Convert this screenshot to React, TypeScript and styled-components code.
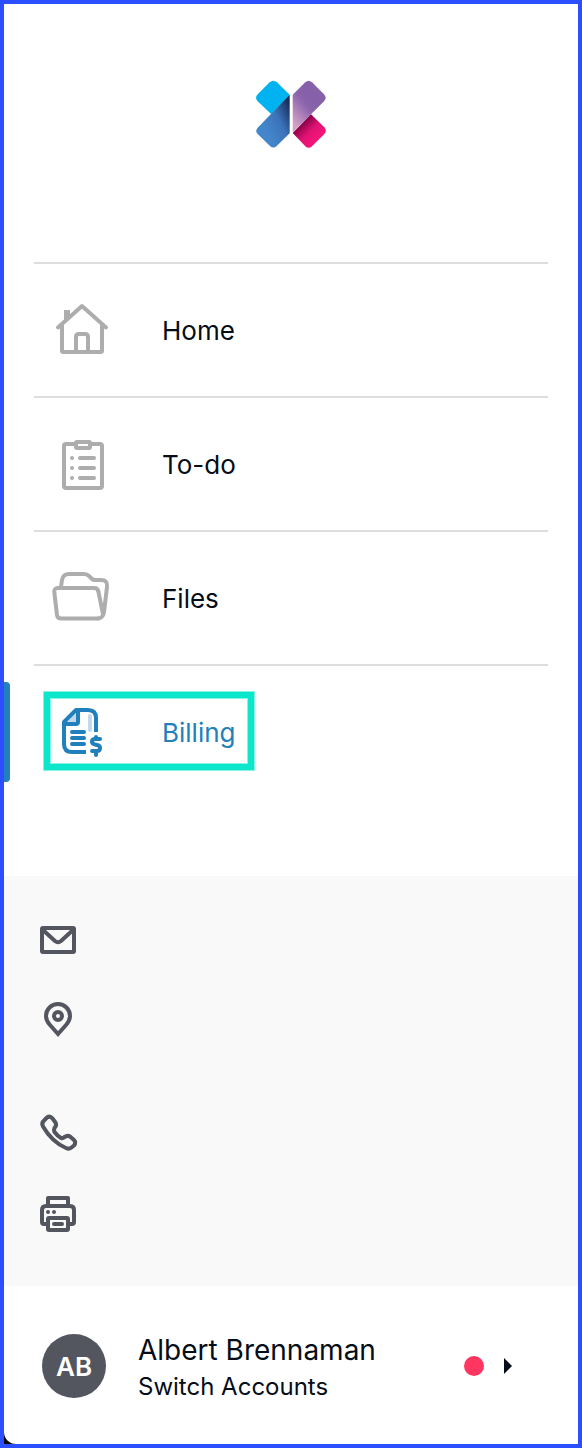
import React from "react";
import styled, { createGlobalStyle } from "styled-components";

const GlobalStyle = createGlobalStyle`
  *, *::before, *::after { box-sizing: border-box; }
  body {
    margin: 0;
    font-family: Inter, "Liberation Sans", sans-serif;
    color: #050d18;
    background: #fff;
  }
`;

const Frame = styled.div`
  min-height: 100vh;
  border: 4px solid #2b4eff;
  background: #050505;
`;

const Sidebar = styled.aside`
  display: flex;
  flex-direction: column;
  min-height: calc(100vh - 8px);
  background: #fff;
  border-bottom-left-radius: 12px;
`;

const Brand = styled.header`
  display: flex;
  justify-content: center;
  padding: 66px 0 102px;

  svg { display: block; }
`;

const Nav = styled.nav`
  padding: 0 30px 78px;
`;

const NavList = styled.ul`
  margin: 0;
  padding: 0;
  list-style: none;
`;

const NavItem = styled.li`
  position: relative;
  border-top: 2px solid #dddddf;
`;

const NavLink = styled.a<{ $active?: boolean }>`
  display: flex;
  align-items: center;
  gap: 46px;
  height: 132px;
  padding-left: 14px;
  font-size: 26px;
  line-height: 32px;
  text-decoration: none;
  color: ${(p) => (p.$active ? "#2180bc" : "#050d18")};

  svg {
    flex: none;
    color: ${(p) => (p.$active ? "#2180bc" : "#adadad")};
  }
`;

const NavLabel = styled.span`
  padding-top: 2px;
`;

const ActiveMarker = styled.span`
  position: absolute;
  left: -30px;
  top: 16px;
  width: 6px;
  height: 100px;
  border-radius: 0 4px 4px 0;
  background: #2180bc;
`;

const Highlight = styled.span`
  position: absolute;
  left: 10px;
  top: 26px;
  width: 210px;
  height: 78px;
  border: 6px solid #0ce7cb;
  box-shadow: 0 0 0 1px #86f3e5, inset 0 0 0 1px #86f3e5;
  pointer-events: none;
`;

const Contacts = styled.section`
  padding: 44px 34px 54px;
  background: #f9f9f9;
  color: #53565e;
`;

const ContactList = styled.ul`
  display: flex;
  flex-direction: column;
  gap: 40px;
  margin: 0;
  padding: 0;
  list-style: none;
`;

const ContactItem = styled.li<{ $tall?: boolean }>`
  min-height: ${(p) => (p.$tall ? 72 : 40)}px;

  svg { display: block; }
`;

const Account = styled.button`
  display: flex;
  align-items: center;
  width: 100%;
  min-height: 158px;
  padding: 2px 66px 0 38px;
  border: 0;
  background: transparent;
  font: inherit;
  color: inherit;
  text-align: left;
  cursor: pointer;
`;

const Avatar = styled.span`
  display: flex;
  flex: none;
  align-items: center;
  justify-content: center;
  width: 64px;
  height: 64px;
  border-radius: 50%;
  background: #53565e;
  color: #fff;
  font-size: 26px;
  font-weight: 600;
`;

const AccountText = styled.span`
  display: flex;
  flex: 1;
  flex-direction: column;
  gap: 1px;
  min-width: 0;
  padding-top: 5px;
  margin-left: 32px;
`;

const AccountName = styled.span`
  font-size: 28px;
  line-height: 36px;
`;

const AccountAction = styled.span`
  font-size: 24px;
  line-height: 36px;
`;

const StatusDot = styled.span`
  flex: none;
  width: 20px;
  height: 20px;
  margin-right: 20px;
  border-radius: 50%;
  background: #ff365f;
`;

const Logo = () => (
  <svg width="90" height="90" viewBox="0 0 270 270" role="img" aria-label="Logo">
    <defs>
      <linearGradient id="blue" gradientUnits="userSpaceOnUse" x1="50" y1="160" x2="138" y2="118">
        <stop offset="0" stopColor="#4486cb" />
        <stop offset="0.5" stopColor="#3c73ba" />
        <stop offset="1" stopColor="#152e5b" />
      </linearGradient>
      <linearGradient id="purple" gradientUnits="userSpaceOnUse" x1="135" y1="150" x2="200" y2="95">
        <stop offset="0" stopColor="#d3a0c6" />
        <stop offset="0.75" stopColor="#8a64ad" />
        <stop offset="1" stopColor="#8660a9" />
      </linearGradient>
      <linearGradient id="pink" gradientUnits="userSpaceOnUse" x1="164" y1="158" x2="208" y2="204">
        <stop offset="0" stopColor="#7c0042" />
        <stop offset="0.6" stopColor="#e01173" />
        <stop offset="1" stopColor="#f01678" />
      </linearGradient>
    </defs>
    <path d="M35 73 71 37Q82 27 93 37L131 74 76 133 35 94Q25 84 35 73Z" fill="#00b3f0" />
    <path d="M131 74V190L92 228Q82 237 72 228L35 192Q26 183 35 173Z" fill="url(#blue)" />
    <path d="M140 74 178 37Q188 28 198 37L234 73Q244 84 234 94L195 133 140 187Z" fill="url(#purple)" />
    <path d="M195 133 235 172Q244 182 235 192L198 229Q188 238 178 229L140 189Z" fill="url(#pink)" />
  </svg>
);

const NavIcon = ({ children }: { children: React.ReactNode }) => (
  <svg
    width="68"
    height="68"
    viewBox="0 0 68 68"
    fill="none"
    stroke="currentColor"
    strokeWidth="4"
    strokeLinecap="round"
    strokeLinejoin="round"
    aria-hidden="true"
  >
    {children}
  </svg>
);

const HomeIcon = () => (
  <NavIcon>
    <path d="M10 31.500 34 10 58 31.500" />
    <path d="M14 29V54.500Q14 56 15.500 56H52.500Q54 56 54 54.500V29" />
    <path d="M16 14H22V20L16 26Z" fill="currentColor" stroke="none" />
    <path d="M18 16V23M20 16V20" />
    <path d="M28 56V41Q28 38 31 38H37Q40 38 40 41V56" />
  </NavIcon>
);

const TodoIcon = () => (
  <NavIcon>
    <path d="M28 14H18Q16 14 16 16V56Q16 58 18 58H52Q54 58 54 56V16Q54 14 52 14H42" />
    <rect x="28" y="12" width="14" height="6" rx="1" />
    <path d="M32 28H46M32 38H46M32 48H46" />
    <path d="M24 28H24.010M24 38H24.010M24 48H24.010" />
  </NavIcon>
);

const FilesIcon = () => (
  <NavIcon>
    <path d="M13 23 14 16Q15 10 21 10H36Q39 10 41 12L44 15Q45 16 47 16H53Q60 16 59 23L56 48Q55 54 50 54.500" />
    <path d="M10 24H46Q50 24 50.500 28L55 50" />
    <path d="M10 24Q6 24 6.300 28L9 51Q9.500 54.500 13 54.500H50" />
  </NavIcon>
);

const BillingIcon = () => (
  <NavIcon>
    <path d="M18 25 29 14V25Z" fill="#c1d9ea" stroke="none" />
    <path d="M42 18V32" stroke="#c1d9ea" />
    <path d="M48 34V20Q48 12 40 12H28L16 24V46Q16 54 24 54H38" strokeLinecap="butt" />
    <path d="M30 12V24Q30 26 28 26H16" />
    <path d="M24 34H36M24 40H36M24 46H36" />
    <path d="M52 41H47Q44 41 44 43.500Q44 46 47 46.500L49 47Q52 47.500 52 50Q52 53 49 53H44M48 41V39M48 54V57" />
  </NavIcon>
);

const ContactIcon = ({ children }: { children: React.ReactNode }) => (
  <svg
    width="44"
    height="40"
    viewBox="0 0 44 40"
    fill="none"
    stroke="currentColor"
    strokeWidth="4"
    strokeLinecap="round"
    strokeLinejoin="round"
    aria-hidden="true"
  >
    {children}
  </svg>
);

const MailIcon = () => (
  <ContactIcon>
    <rect x="4" y="8" width="32" height="24" rx="1" />
    <path d="M5 10 17 21Q20 23.500 23 21L35 10" />
  </ContactIcon>
);

const PinIcon = () => (
  <ContactIcon>
    <path d="M20 34 12 25Q8 20.500 8 16A12 12 0 0 1 32 16Q32 20.500 28 25Z" strokeLinejoin="miter" />
    <circle cx="20" cy="16" r="4" />
  </ContactIcon>
);

const PhoneIcon = () => (
  <ContactIcon>
    <path d="M6.500 8 9 5.500Q12 3.500 14.500 6.500L17.500 10.500Q19 13.500 16.500 16Q15.500 18 16.500 20Q19.500 24 23 26Q25 26.500 26.500 25Q29.500 23 32 24.500L36 28Q38.500 30.500 36 33.500L33.500 35.500Q31 37.500 28 36Q14 30 5 14.500Q3 11 6.500 8Z" />
  </ContactIcon>
);

const PrinterIcon = () => (
  <ContactIcon>
    <path d="M10 14V6H30V14" />
    <path d="M10 32H6Q4 32 4 30V18Q4 14 8 14H32Q36 14 36 18V30Q36 32 34 32H30" />
    <rect x="10" y="26" width="20" height="12" rx="1" />
    <path d="M16 32H24" />
    <path d="M10 20H10.010M16 20H16.010" />
  </ContactIcon>
);

const navItems = [
  { label: "Home", icon: <HomeIcon /> },
  { label: "To-do", icon: <TodoIcon /> },
  { label: "Files", icon: <FilesIcon /> },
  { label: "Billing", icon: <BillingIcon />, active: true },
];

export default function App() {
  return (
    <>
      <GlobalStyle />
      <Frame>
        <Sidebar>
          <Brand>
            <Logo />
          </Brand>
          <Nav>
            <NavList>
              {navItems.map(({ label, icon, active }) => (
                <NavItem key={label}>
                  {active && <ActiveMarker />}
                  <NavLink href="#" $active={active} aria-current={active ? "page" : undefined}>
                    {icon}
                    <NavLabel>{label}</NavLabel>
                  </NavLink>
                  {active && <Highlight />}
                </NavItem>
              ))}
            </NavList>
          </Nav>
          <Contacts>
            <ContactList>
              <ContactItem><MailIcon /></ContactItem>
              <ContactItem $tall><PinIcon /></ContactItem>
              <ContactItem><PhoneIcon /></ContactItem>
              <ContactItem><PrinterIcon /></ContactItem>
            </ContactList>
          </Contacts>
          <Account type="button">
            <Avatar>AB</Avatar>
            <AccountText>
              <AccountName>Albert Brennaman</AccountName>
              <AccountAction>Switch Accounts</AccountAction>
            </AccountText>
            <StatusDot />
            <svg width="8" height="16" viewBox="0 0 8 16" aria-hidden="true">
              <path d="M0 0 8 8 0 16Z" fill="#050d18" />
            </svg>
          </Account>
        </Sidebar>
      </Frame>
    </>
  );
}
